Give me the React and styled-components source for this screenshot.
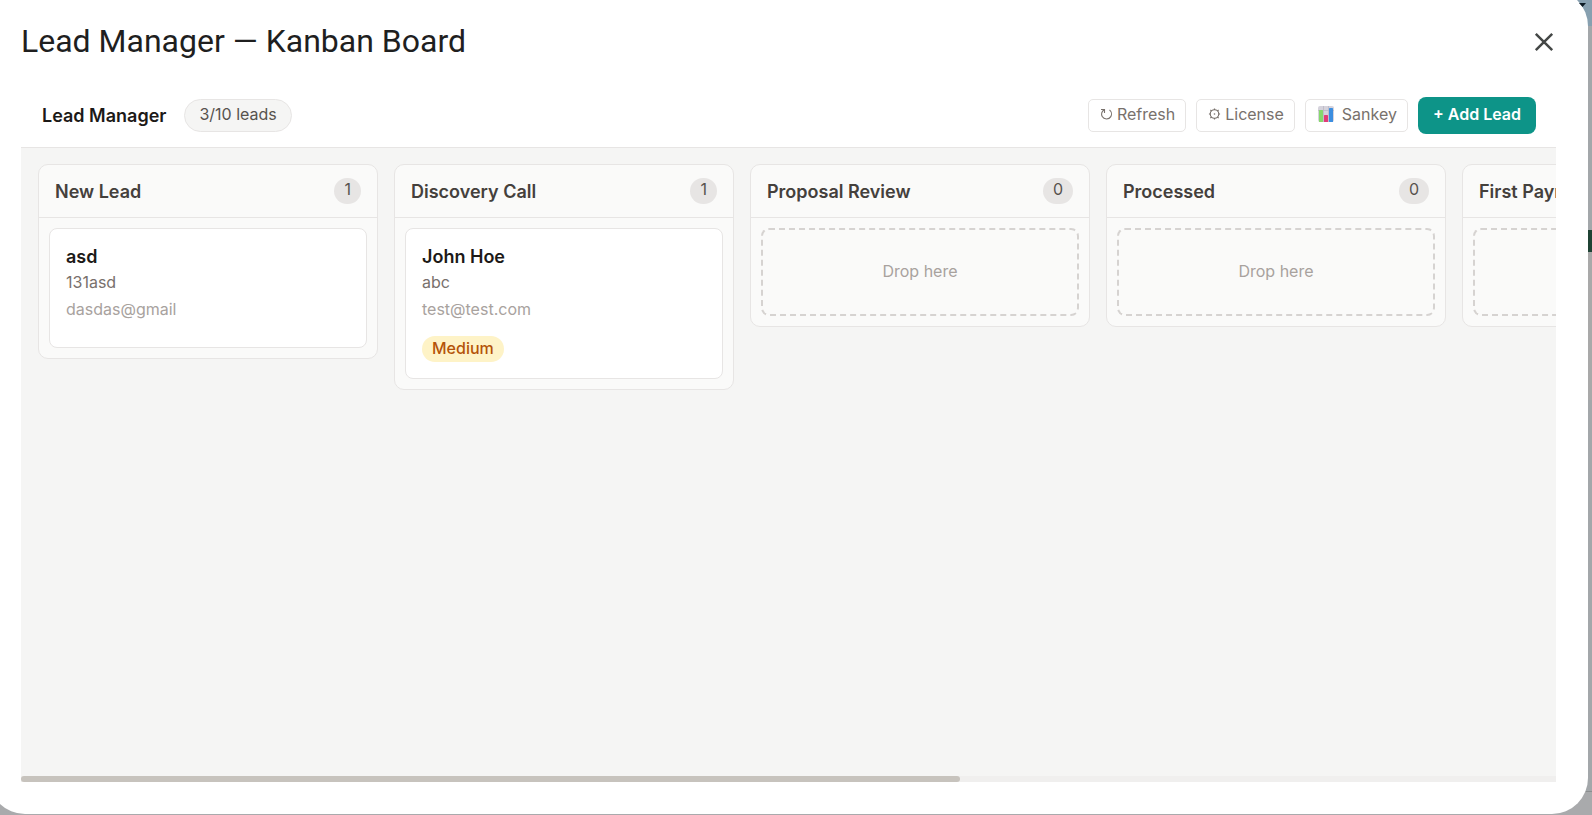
import React, { useEffect, useRef, useState } from "react";
import styled, { createGlobalStyle } from "styled-components";

const colors = {
    ink: "#1c1917",
    heading: "#44403c",
    body: "#57534e",
    muted: "#78716c",
    faint: "#a8a29e",
    line: "#e7e5e4",
    dash: "#d6d3d1",
    panel: "#fafaf9",
    board: "#f5f5f4",
    teal: "#0d9488",
};

const stageCount = 7;

const stages = [
    {
        title: "New Lead",
        leads: [{ name: "asd", company: "131asd", email: "dasdas@gmail" }],
    },
    {
        title: "Discovery Call",
        leads: [{ name: "John Hoe", company: "abc", email: "test@test.com", priority: "Medium" }],
    },
    { title: "Proposal Review", leads: [] },
    { title: "Processed", leads: [] },
    { title: "First Payment", leads: [] },
];

const GlobalStyle = createGlobalStyle`
    * {
        box-sizing: border-box;
    }
    body {
        margin: 0;
        overflow: hidden;
        font-family: Inter, "Liberation Sans", sans-serif;
        font-size: 16px;
        line-height: 24px;
        color: ${colors.ink};
    }
    h1, h2, h3, p {
        margin: 0;
    }
    button {
        font: inherit;
        cursor: pointer;
    }
`;

const Backdrop = styled.div`
    position: relative;
    display: flex;
    height: 100vh;
    overflow: hidden;
    background: linear-gradient(
        #87a0b0 0 26px,
        #a3a7aa 26px 230px,
        #1f4334 230px 252px,
        #a9a9a9 252px 400px,
        #a3a7aa 400px 791px,
        #8b8e8f 791px 792px,
        #a9aaac 792px
    );
`;

const Caret = styled.svg`
    position: absolute;
    top: 3px;
    right: 6px;
`;

// bleeds past the top and left edges of the window
const Dialog = styled.div`
    flex: 1;
    min-width: 0;
    display: flex;
    flex-direction: column;
    margin: -10px 4px 1px -11px;
    padding: 10px 32px 32px;
    border-radius: 36px;
    background: #fff;
`;

const DialogHeader = styled.header`
    display: flex;
    align-items: center;
    justify-content: space-between;
    height: 84px;
`;

const DialogTitle = styled.h1`
    padding-bottom: 2px;
    font-family: Roboto, sans-serif;
    font-size: 32px;
    font-weight: 400;
    line-height: 40px;
    color: #1f1f1f;
`;

const CloseButton = styled.button`
    display: flex;
    padding: 3px 0;
    border: 0;
    background: none;
    color: #444746;
`;

const Toolbar = styled.div`
    display: flex;
    align-items: center;
    justify-content: space-between;
    padding: 13px 20px 13px 21px;
    border-bottom: 1px solid ${colors.line};
`;

const Group = styled.div`
    display: flex;
    align-items: center;
    gap: ${(props) => props.$gap}px;
`;

const ToolbarTitle = styled.h2`
    font-size: 18px;
    font-weight: 600;
    line-height: 24px;
`;

const LeadCount = styled.span`
    padding: 2px 14px 5px;
    border: 1px solid ${colors.line};
    border-radius: 17px;
    background: ${colors.board};
    color: ${colors.body};
`;

const ToolButton = styled.button`
    display: flex;
    align-items: center;
    gap: ${(props) => props.$gap || 4}px;
    padding: 2px 10px 5px 11px;
    border: 1px solid ${colors.line};
    border-radius: 5px;
    background: #fff;
    color: ${colors.muted};
`;

const AddButton = styled.button`
    padding: 5px 15px 8px;
    border: 0;
    border-radius: 8px;
    background: ${colors.teal};
    color: #fff;
    font-weight: 600;
`;

const Board = styled.main`
    flex: 1;
    display: grid;
    grid-template-columns: repeat(${stageCount}, 340px);
    align-items: start;
    gap: 16px;
    padding: 16px 16px 16px 17px;
    overflow: auto;
    scrollbar-width: none;
    background: ${colors.board};
`;

const Track = styled.div`
    height: 6px;
    background: #f0efee;
`;

const Thumb = styled.div`
    height: 6px;
    border-radius: 3px;
    background: #c7c3bd;
`;

const Column = styled.section`
    border: 1px solid ${colors.line};
    border-radius: 10px;
    background: ${colors.panel};
`;

const ColumnHeader = styled.div`
    display: flex;
    align-items: center;
    justify-content: space-between;
    padding: 13px 16px;
    border-bottom: 1px solid ${colors.line};
`;

const ColumnTitle = styled.h2`
    padding-top: 2px;
    font-size: 18px;
    font-weight: 600;
    line-height: 24px;
    color: ${colors.heading};
    white-space: nowrap;
`;

const ColumnCount = styled.span`
    padding: 0 10px 4px;
    border-radius: 13px;
    background: ${colors.line};
    color: ${colors.body};
    line-height: 22px;
`;

const ColumnBody = styled.div`
    padding: 10px;
`;

const DropZone = styled.div`
    display: flex;
    align-items: center;
    justify-content: center;
    height: 88px;
    padding-bottom: 2px;
    border: 2px dashed ${colors.dash};
    border-radius: 8px;
    color: ${colors.faint};
`;

const Card = styled.article`
    padding: 16px;
    border: 1px solid ${colors.line};
    border-radius: 8px;
    background: #fff;
`;

const LeadName = styled.h3`
    font-size: 18px;
    font-weight: 600;
    line-height: 24px;
`;

const Company = styled.p`
    line-height: 26px;
    color: ${colors.muted};
`;

const Email = styled.p`
    line-height: 28px;
    color: ${colors.faint};
`;

const Tags = styled.div`
    display: flex;
    margin-top: 8px;
`;

const Tag = styled.span`
    margin-top: 5px;
    padding: 0 10px 2px;
    border-radius: 13px;
    background: #fef3c7;
    color: #b45309;
    font-weight: 500;
`;

const CloseIcon = () => (
    <svg width="24" height="24" viewBox="0 0 24 24" fill="none" stroke="currentColor" strokeWidth="2.5" aria-hidden="true">
        <path d="M3.8 3.8 20.2 20.2M20.2 3.8 3.8 20.2" />
    </svg>
);

const RefreshIcon = () => (
    <svg width="13" height="14" viewBox="0 0 13 14" fill="none" stroke="currentColor" strokeWidth="1.1" aria-hidden="true">
        <path d="M1 2.5H4.5V6M4.2 2.8C1.5 4.2 1 7.5 2.2 9.6C4 12.7 9 12.7 10.8 9.6C12 7.5 11.6 4.5 9.5 3" />
    </svg>
);

const GearIcon = () => (
    <svg width="13" height="14" viewBox="0 0 14 14" fill="none" stroke="currentColor" aria-hidden="true">
        <circle cx="7" cy="7" r="4.6" strokeWidth="1.2" />
        <path d="M7 1V2.6M7 11.4V13M1 7H2.6M11.4 7H13M2.6 2.6 3.9 3.9M10.1 10.1 11.4 11.4M2.6 11.4 3.9 10.1M10.1 3.9 11.4 2.6" strokeWidth="1.3" />
        <circle cx="7" cy="7" r="0.9" fill="currentColor" stroke="none" />
    </svg>
);

const ChartIcon = () => (
    <svg width="18" height="18" viewBox="0 0 18 18" aria-hidden="true">
        <rect x="1" y="1" width="16" height="16" rx="2" fill="#d5d3dc" />
        <path d="M1 5.5H17M6.5 1V17M11.5 1V17" stroke="#bab8c4" strokeWidth="0.8" />
        <rect x="2" y="5" width="4" height="12" rx="0.6" fill="#86d86c" />
        <rect x="7" y="10" width="4" height="7" rx="0.6" fill="#e23a78" />
        <rect x="12" y="3" width="4" height="14" rx="0.6" fill="#3c8ee0" />
    </svg>
);

const LeadCard = ({ lead }) => (
    <Card>
        <LeadName>{lead.name}</LeadName>
        <Company>{lead.company}</Company>
        <Email>{lead.email}</Email>
        <Tags>{lead.priority && <Tag>{lead.priority}</Tag>}</Tags>
    </Card>
);

const StageColumn = ({ stage }) => (
    <Column>
        <ColumnHeader>
            <ColumnTitle>{stage.title}</ColumnTitle>
            <ColumnCount>{stage.leads.length}</ColumnCount>
        </ColumnHeader>
        <ColumnBody>
            {stage.leads.length
                ? stage.leads.map((lead) => <LeadCard key={lead.name} lead={lead} />)
                : <DropZone>Drop here</DropZone>
            }
        </ColumnBody>
    </Column>
);

const App = () => {
    const boardRef = useRef(null);
    const [thumb, setThumb] = useState({ width: 0, left: 0 });

    const measure = () => {
        const el = boardRef.current;
        setThumb({
            width: (el.clientWidth / el.scrollWidth) * 100,
            left: (el.scrollLeft / el.scrollWidth) * 100,
        });
    };

    useEffect(() => {
        measure();
        window.addEventListener("resize", measure);
        return () => window.removeEventListener("resize", measure);
    }, []);

    return (
        <Backdrop>
            <GlobalStyle />
            <Caret width="7" height="4" viewBox="0 0 7 4" aria-hidden="true">
                <path d="M0 0H7L3.5 4Z" fill="#0b1a24" />
            </Caret>
            <Dialog role="dialog" aria-labelledby="dialog-title">
                <DialogHeader>
                    <DialogTitle id="dialog-title">Lead Manager — Kanban Board</DialogTitle>
                    <CloseButton aria-label="Close">
                        <CloseIcon />
                    </CloseButton>
                </DialogHeader>
                <Toolbar>
                    <Group $gap={18}>
                        <ToolbarTitle>Lead Manager</ToolbarTitle>
                        <LeadCount>3/10 leads</LeadCount>
                    </Group>
                    <Group $gap={10}>
                        <ToolButton><RefreshIcon />Refresh</ToolButton>
                        <ToolButton><GearIcon />License</ToolButton>
                        <ToolButton $gap={7}><ChartIcon />Sankey</ToolButton>
                        <AddButton>+ Add Lead</AddButton>
                    </Group>
                </Toolbar>
                <Board ref={boardRef} onScroll={measure}>
                    {stages.map((stage) => <StageColumn key={stage.title} stage={stage} />)}
                </Board>
                <Track>
                    <Thumb style={{ width: `${thumb.width}%`, marginLeft: `${thumb.left}%` }} />
                </Track>
            </Dialog>
        </Backdrop>
    );
};

export default App;
